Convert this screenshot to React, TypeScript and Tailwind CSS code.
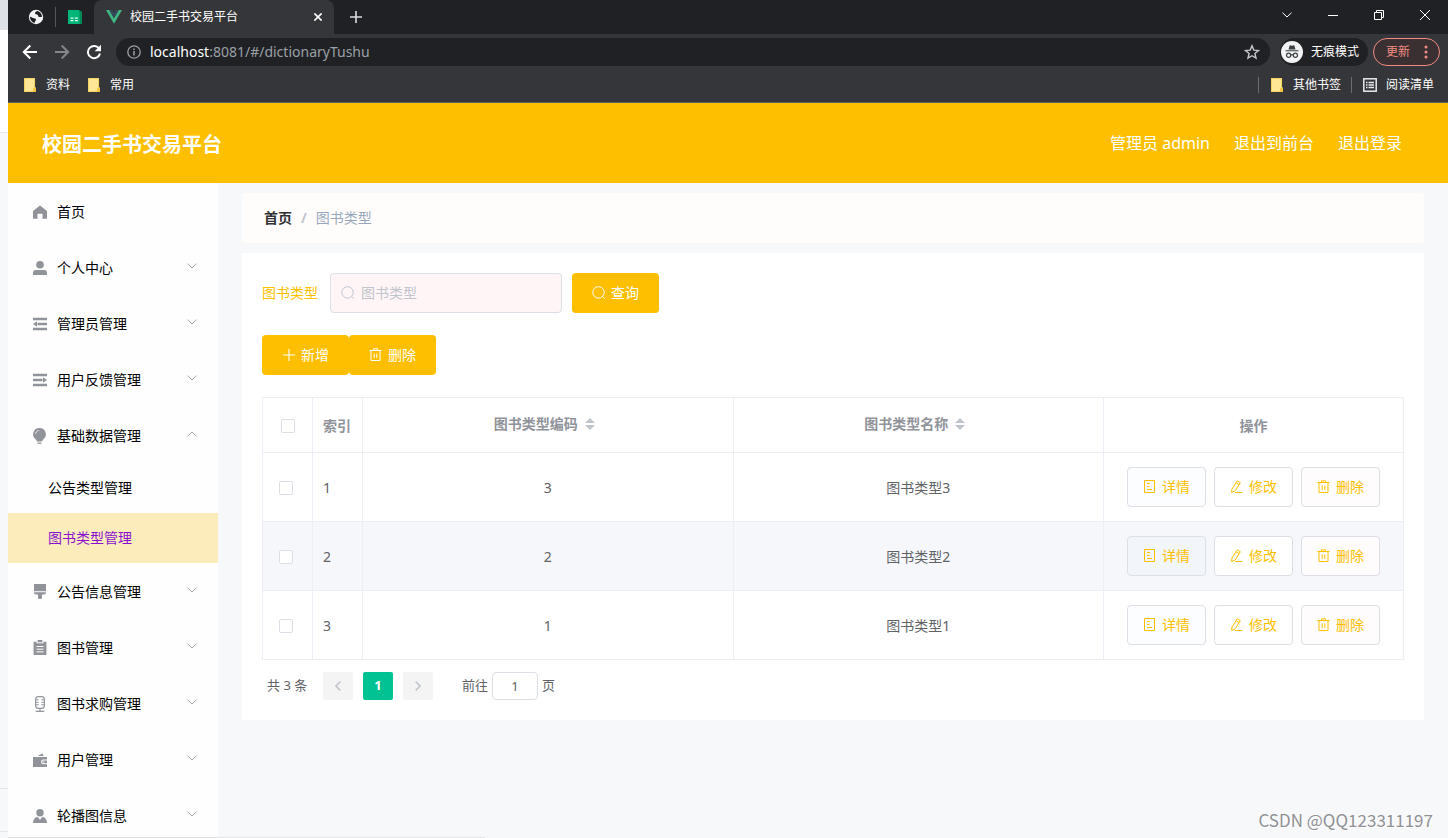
import type { ReactNode } from 'react';

type IconProps = { className?: string };

type MenuEntry = {
  label: string;
  icon: ReactNode;
  arrow?: 'up' | 'down';
  children?: { label: string; active?: boolean }[];
};

/* ---------- Icons ---------- */

const HomeIcon = () => (
  <svg viewBox="0 0 14 14" className="size-[14px]" fill="currentColor">
    <path d="M7 .4 0 6v7.2c0 .4.2.6.6.6h3.9V9.5c0-.5.3-.8.8-.8h3.4c.5 0 .8.3.8.8v4.3h3.9c.4 0 .6-.2.6-.6V6z" />
  </svg>
);

const UserIcon = () => (
  <svg viewBox="0 0 14 14" className="size-[14px]" fill="currentColor">
    <circle cx="7" cy="3.8" r="3.8" />
    <path d="M2.6 9h8.8C13 9 14 10.200 14 11.600V14H0v-2.400C0 10.200 1 9 2.600 9z" />
  </svg>
);

const FoldIcon = () => (
  <svg viewBox="0 0 14 14" className="size-[14px]" fill="currentColor">
    <path d="M0 .800h14v2.400H0zM4.500 5.800H14v2.400H4.500zM0 10.800h14v2.400H0zM0 7l4-2.700v5.400z" />
  </svg>
);

const UnfoldIcon = () => (
  <svg viewBox="0 0 14 14" className="size-[14px]" fill="currentColor">
    <path d="M0 .800h14v2.400H0zM0 5.800h9.500v2.400H0zM0 10.800h14v2.400H0zM14 7l-4-2.700v5.400z" />
  </svg>
);

const BulbIcon = () => (
  <svg viewBox="0 0 14 16" className="h-4 w-[14px]" fill="currentColor">
    <path d="M6.500 0a6.400 6.400 0 0 1 3.700 11.600c-.6.5-.9 1-1.100 1.900H3.900c-.2-.9-.5-1.400-1.100-1.900A6.400 6.400 0 0 1 6.500 0zM4.500 14.600h4v1.200h-4z" />
    <path d="M2.700 5.800c.2-1.800 1.400-3 3-3.400" fill="none" stroke="#fff" strokeWidth=".9" />
  </svg>
);

const BrushIcon = () => (
  <svg viewBox="0 0 14 15" className="h-[15px] w-[14px]" fill="currentColor">
    <path d="M1 0h12v7.200H1zM1 8.200h12c0 1.600-.9 2.400-2.400 2.400H9v3.200c0 .8-.7 1.200-2 1.200s-2-.4-2-1.200v-3.200H3.400C1.900 10.600 1 9.800 1 8.200z" />
  </svg>
);

const ClipboardIcon = () => (
  <svg viewBox="0 0 14 15" className="h-[15px] w-[14px]" fill="currentColor">
    <path d="M.6 1.800h3v1.500h6.800V1.800h3V15H.6zM4.600 0h4.800v2.300H4.600z" />
    <path d="M3.500 6.500h7M3.500 9.200h7M3.500 11.900h7" stroke="#fff" strokeWidth="1" />
  </svg>
);

const MicIcon = () => (
  <svg viewBox="0 0 14 16" className="h-4 w-[14px]" fill="none" stroke="currentColor" strokeWidth="1.1">
    <rect x="2.600" y=".6" width="8.800" height="11.800" rx="3" />
    <path d="M2.600 3.800h3M2.600 6.300h3M2.600 8.800h3M8.400 3.800h3M8.400 6.300h3M8.400 8.800h3M7 12.400v3M2.800 15.400h8.400" />
  </svg>
);

const WalletIcon = () => (
  <svg viewBox="0 0 14 14" className="size-[14px]" fill="currentColor">
    <path d="M4.500 3 9.300.6l1.500 2.400z" />
    <path d="M0 4h14v2.600h-3.600a2.300 2.300 0 0 0 0 4.600H14V14H0z" />
    <path d="M10.500 7.600H14v2.600h-3.500a1.300 1.300 0 0 1 0-2.600z" />
    <circle cx="10.800" cy="8.900" r=".7" fill="#fff" />
  </svg>
);

const MemberIcon = () => (
  <svg viewBox="0 0 14 14" className="size-[14px]" fill="currentColor">
    <circle cx="7" cy="3.700" r="3.700" />
    <path d="M4.400 7.800 7 10.700l2.600-2.900c2.600.8 4.400 3 4.400 6.200H0c0-3.200 1.800-5.400 4.400-6.200z" />
  </svg>
);

const SearchIcon = ({ className }: IconProps) => (
  <svg viewBox="0 0 14 14" className={className} fill="none" stroke="currentColor" strokeWidth="1">
    <circle cx="6.500" cy="6.400" r="5.700" />
    <path d="m10.500 10.400 2.300 2.300" />
  </svg>
);

const PlusIcon = () => (
  <svg viewBox="0 0 14 14" className="size-[14px]" fill="none" stroke="currentColor" strokeWidth="1.1">
    <path d="M7 1v12M1 7h12" />
  </svg>
);

const TrashIcon = () => (
  <svg viewBox="0 0 14 14" className="size-[14px]" fill="none" stroke="currentColor" strokeWidth="1">
    <path d="M.5 2.500h12M4.500 2.500V.8h4v1.700M2 2.500v10h9v-10M5.200 5.500V10M7.800 5.500V10" />
  </svg>
);

const DocumentIcon = () => (
  <svg viewBox="0 0 14 14" className="size-[14px]" fill="none" stroke="currentColor" strokeWidth="1">
    <path d="M1.500.500h10v12h-10zM4 3.500h3M4 6.500h2.500M4 9.500h5" />
  </svg>
);

const EditIcon = () => (
  <svg viewBox="0 0 14 14" className="size-[14px]" fill="none" stroke="currentColor" strokeWidth="1">
    <path d="M7.300.900 10.300 2.700 5.300 10.800 1.600 12.500 2 8.900zM6.200 2.800l3 1.800M5 12.500h7.500" />
  </svg>
);

const ChevronIcon = ({ className }: IconProps) => (
  <svg viewBox="0 0 10 6" className={className} fill="none" stroke="currentColor" strokeWidth="1">
    <path d="m.5.700 4.500 4.300L9.500.700" />
  </svg>
);

const FolderIcon = () => (
  <svg viewBox="0 0 12 14" className="h-[14px] w-3">
    <path d="M0 0h11v9l1 1v4H0z" fill="#ffe694" />
    <path d="M.4.400h10.200v9M.4.400v13.200H9" fill="none" stroke="#f2c94c" strokeWidth=".8" />
    <path d="M9 13.600V11c0-.8.500-1.300 1.500-1.300s1.500.5 1.500 1.300v3H9z" fill="#f0c541" />
  </svg>
);

const GlobeIcon = () => (
  <svg viewBox="0 0 16 16" className="size-4">
    <circle cx="8" cy="8" r="7.200" fill="#f1f3f4" />
    <path d="M1.800 7.600 5 8.900c1.300.5 2.600.1 3 1.400.3 1-.8 1.300-1 2.300l-.3 1.500C3.800 13.500 1.900 11 1.800 7.600zM9.300 2c-1.700.5-2.500 1.400-2.200 2.500.3 1 1.700.6 2.500 1.200.9.700.3 1.700 1.300 2.200 1 .4 1.800-.1 3.200-.2C13.900 4.800 12 2.500 9.300 2z" fill="#202124" />
  </svg>
);

const SheetIcon = () => (
  <svg viewBox="0 0 14 14" className="size-[14px]">
    <path d="M0 0h11.500v1.500H14V14H0z" fill="#00b578" />
    <path d="M11.500 1.500H14V14h-2.500z" fill="#008a55" />
    <path d="M2.500 7.500h3v1.300h-3zM6.800 7.500h3v1.300h-3zM2.500 10h3v1.300h-3zM6.800 10h3v1.300h-3z" fill="#e8fff5" />
  </svg>
);

const VueIcon = () => (
  <svg viewBox="0 0 16 14" className="h-[14px] w-4">
    <path d="M0 0h3.200L8 8.300 12.800 0H16L8 13.800z" fill="#41b883" />
    <path d="M3.200 0h3L8 3.100 9.800 0h3L8 8.300z" fill="#35495e" />
  </svg>
);

const BackIcon = ({ className }: IconProps) => (
  <svg viewBox="0 0 16 16" className={className} fill="none" stroke="currentColor" strokeWidth="2">
    <path d="M15 8H2.500M8.300 1.500 1.800 8l6.500 6.500" />
  </svg>
);

const ReloadIcon = () => (
  <svg viewBox="0 0 16 16" className="size-4">
    <path d="M13.300 5A6.100 6.100 0 1 0 14 9.500" fill="none" stroke="#fff" strokeWidth="2" />
    <path d="M15 .8v6.400H8.600z" fill="#fff" />
  </svg>
);

const InfoIcon = () => (
  <svg viewBox="0 0 14 14" className="size-[14px]" fill="none" stroke="#9aa0a6">
    <circle cx="7" cy="7" r="6.200" strokeWidth="1.300" />
    <path d="M7 6v4.500M7 3.400v1.500" strokeWidth="1.500" />
  </svg>
);

const StarIcon = () => (
  <svg viewBox="0 0 16 16" className="size-4" fill="none" stroke="#c4c7cb" strokeWidth="1.400">
    <path d="m8 1.800 1.800 4.300 4.700.4-3.600 3 1.100 4.600L8 11.700l-4 2.400 1.100-4.600-3.600-3 4.700-.4z" />
  </svg>
);

const IncognitoIcon = () => (
  <svg viewBox="0 0 22 22" className="size-[22px]">
    <circle cx="11" cy="11" r="11" fill="#f1f3f4" />
    <path d="M7.500 8.500 8.600 4.800c.2-.5.600-.6 1.100-.4l1.300.4 1.300-.4c.5-.2.900-.1 1.100.4l1.100 3.700zM4.500 9.200h13v1.100h-13z" fill="#3c4043" />
    <g fill="none" stroke="#3c4043" strokeWidth="1.200">
      <circle cx="7.600" cy="14.300" r="2.100" />
      <circle cx="14.400" cy="14.300" r="2.100" />
      <path d="M9.700 14c.8-.5 1.800-.5 2.600 0" />
    </g>
  </svg>
);

const ReadingListIcon = () => (
  <svg viewBox="0 0 14 14" className="size-[14px]" fill="none" stroke="#e8eaed">
    <rect x=".8" y=".8" width="12.400" height="12.400" strokeWidth="1.500" />
    <path d="M3 4.500h1.500M3 7h1.500M3 9.500h1.500M5.500 4.500H11M5.500 7H11M5.500 9.500H11" strokeWidth="1.300" />
  </svg>
);

/* ---------- Data ---------- */

const menu: MenuEntry[] = [
  { label: '首页', icon: <HomeIcon /> },
  { label: '个人中心', icon: <UserIcon />, arrow: 'down' },
  { label: '管理员管理', icon: <FoldIcon />, arrow: 'down' },
  { label: '用户反馈管理', icon: <UnfoldIcon />, arrow: 'down' },
  {
    label: '基础数据管理',
    icon: <BulbIcon />,
    arrow: 'up',
    children: [{ label: '公告类型管理' }, { label: '图书类型管理', active: true }],
  },
  { label: '公告信息管理', icon: <BrushIcon />, arrow: 'down' },
  { label: '图书管理', icon: <ClipboardIcon />, arrow: 'down' },
  { label: '图书求购管理', icon: <MicIcon />, arrow: 'down' },
  { label: '用户管理', icon: <WalletIcon />, arrow: 'down' },
  { label: '轮播图信息', icon: <MemberIcon />, arrow: 'down' },
];

const rows = [
  { index: 1, code: 3, name: '图书类型3' },
  { index: 2, code: 2, name: '图书类型2', hovered: true },
  { index: 3, code: 1, name: '图书类型1' },
];

/* ---------- Browser chrome ---------- */

function BrowserChrome() {
  return (
    <div className="shrink-0 border-b border-[#5f6062] bg-[#35363a] text-xs text-white">
      {/* Tabs */}
      <div className="flex h-[34px] items-stretch bg-[#202124]">
        <div className="flex items-center pl-5">
          <GlobeIcon />
          <span className="mr-3 ml-[11px] h-5 w-px bg-[#54565a]" />
          <SheetIcon />
        </div>
        <div className="ml-3 flex w-60 items-center rounded-t-lg bg-[#35363a] px-3">
          <VueIcon />
          <span className="ml-2 flex-1">校园二手书交易平台</span>
          <button aria-label="关闭标签页" className="flex size-2 items-center">
            <svg viewBox="0 0 8 8" className="size-2" stroke="#fff" strokeWidth="1.6">
              <path d="m.4.4 7.200 7.200M7.600.4.400 7.600" />
            </svg>
          </button>
        </div>
        <button aria-label="新标签页" className="ml-4 flex items-center">
          <svg viewBox="0 0 12 12" className="size-3" stroke="#dadce0" strokeWidth="1.600">
            <path d="M6 0v12M0 6h12" />
          </svg>
        </button>
        <div className="ml-auto flex h-[29px] items-center gap-9 pr-[18px]">
          <button aria-label="搜索标签页">
            <ChevronIcon className="h-[6px] w-[10px]" />
          </button>
          <button aria-label="最小化">
            <svg viewBox="0 0 10 10" className="size-[10px]" stroke="#fff">
              <path d="M0 5.500h10" />
            </svg>
          </button>
          <button aria-label="还原">
            <svg viewBox="0 0 10 10" className="size-[10px]" fill="none" stroke="#fff">
              <path d="M.5 2.500h7v7h-7zM2.500 2.500v-2h7v7h-2" />
            </svg>
          </button>
          <button aria-label="关闭">
            <svg viewBox="0 0 10 10" className="size-[10px]" stroke="#fff">
              <path d="m0 0 10 10M10 0 0 10" />
            </svg>
          </button>
        </div>
      </div>

      {/* Toolbar */}
      <div className="flex h-9 items-center pr-2 pl-[14px]">
        <button aria-label="后退"><BackIcon className="size-4" /></button>
        <button aria-label="前进" className="ml-4 text-[#85878a]"><BackIcon className="size-4 rotate-180" /></button>
        <button aria-label="重新加载" className="ml-4"><ReloadIcon /></button>
        <div className="ml-[14px] flex h-7 flex-1 items-center rounded-full bg-[#202124] pr-[10px] pl-[11px]">
          <InfoIcon />
          <span className="ml-[9px] flex-1 text-sm text-[#9aa0a6]">
            <span className="text-white">localhost</span>:8081/#/dictionaryTushu
          </span>
          <StarIcon />
        </div>
        <div className="ml-[10px] flex h-7 w-[88px] items-center rounded-full bg-[#202124] pl-px">
          <IncognitoIcon />
          <span className="ml-2">无痕模式</span>
        </div>
        <button className="ml-[5px] flex h-7 w-[67px] items-center rounded-full border border-[#f28b82] bg-[#3a2f31] pl-3 text-[#f28b82]">
          更新
          <svg viewBox="0 0 4 14" className="ml-[14px] h-[14px] w-1" fill="#f28b82">
            <circle cx="2" cy="2" r="1.500" />
            <circle cx="2" cy="7" r="1.500" />
            <circle cx="2" cy="12" r="1.500" />
          </svg>
        </button>
      </div>

      {/* Bookmarks */}
      <div className="flex h-8 items-center pr-[14px] pb-[2px] pl-4">
        <a href="#" className="flex items-center gap-[10px]"><FolderIcon />资料</a>
        <a href="#" className="ml-[18px] flex items-center gap-[10px]"><FolderIcon />常用</a>
        <span className="ml-auto h-4 w-px bg-[#6a6c70]" />
        <a href="#" className="ml-3 flex items-center gap-[10px]"><FolderIcon />其他书签</a>
        <span className="ml-[10px] h-4 w-px bg-[#6a6c70]" />
        <a href="#" className="ml-[11px] flex items-center gap-[9px]"><ReadingListIcon />阅读清单</a>
      </div>
    </div>
  );
}

/* ---------- App ---------- */

function Sidebar() {
  return (
    <nav className="w-[210px] shrink-0 bg-[#fefefe] text-sm text-black">
      {menu.map((item) => (
        <div key={item.label}>
          <a href="#" className="flex h-14 items-center pr-[21px] pl-[25px]">
            <span className="flex w-[14px] justify-center pt-px text-[#909399]">{item.icon}</span>
            <span className="ml-[10px] flex-1 pt-px">{item.label}</span>
            {item.arrow === 'down' && <ChevronIcon className="mb-[2px] h-[6px] w-[10px] text-[#a8a09c]" />}
            {item.arrow === 'up' && <ChevronIcon className="mb-[2px] h-[6px] w-[10px] rotate-180 text-[#a8a09c]" />}
          </a>
          {item.children?.map((child) => (
            <a
              key={child.label}
              href="#"
              className={
                child.active
                  ? 'flex h-[50px] items-center bg-[#fdecbb] pl-10 text-[#8a10d0]'
                  : 'flex h-[50px] items-center pl-10'
              }
            >
              {child.label}
            </a>
          ))}
        </div>
      ))}
    </nav>
  );
}

function SortCarets() {
  return (
    <svg viewBox="0 0 10 12" className="mx-[7px] h-3 w-[10px]" fill="#c0c4cc">
      <path d="M5 0l5 5H0zM5 12l5-5H0z" />
    </svg>
  );
}

function CheckBox({ label }: { label: string }) {
  return (
    <input
      type="checkbox"
      aria-label={label}
      className="block size-[14px] appearance-none rounded-[2px] border border-[#dcdfe6] bg-white"
    />
  );
}

function BookTypeTable() {
  return (
    <table className="mt-[22px] w-full table-fixed border-collapse text-sm text-[#606266]">
      <colgroup>
        <col className="w-[50px]" />
        <col className="w-[50px]" />
        <col />
        <col />
        <col className="w-[300px]" />
      </colgroup>
      <thead className="text-[#909399]">
        <tr className="h-[55px]">
          <th className="border border-[#ebeef5] pt-[2px] pl-[18px]"><CheckBox label="全选" /></th>
          <th className="border border-[#ebeef5] pt-[2px] pl-[10px] text-left">索引</th>
          <th className="border border-[#ebeef5] pb-[2px]">
            <div className="flex items-center justify-center">图书类型编码<SortCarets /></div>
          </th>
          <th className="border border-[#ebeef5] pb-[2px]">
            <div className="flex items-center justify-center">图书类型名称<SortCarets /></div>
          </th>
          <th className="border border-[#ebeef5] pt-[2px]">操作</th>
        </tr>
      </thead>
      <tbody>
        {rows.map((row) => (
          <tr key={row.index} className={row.hovered ? 'h-[69px] bg-[#f5f7fa]' : 'h-[69px] bg-white'}>
            <td className="border border-[#ebeef5] pt-[2px] pl-4"><CheckBox label={`选择第${row.index}行`} /></td>
            <td className="border border-[#ebeef5] pt-[2px] pl-[10px]">{row.index}</td>
            <td className="border border-[#ebeef5] pt-[2px] text-center">{row.code}</td>
            <td className="border border-[#ebeef5] pt-[2px] text-center">{row.name}</td>
            <td className="border border-[#ebeef5]">
              <div className="flex justify-center gap-2 text-[#fdbf00]">
                <button
                  className={
                    row.hovered
                      ? 'flex h-10 items-center gap-[5px] rounded border border-[#dcdfe6] bg-[#f2f5fa] px-[15px]'
                      : 'flex h-10 items-center gap-[5px] rounded border border-[#dcdfe6] bg-[#fcfdff] px-[15px]'
                  }
                >
                  <DocumentIcon />详情
                </button>
                <button className="flex h-10 items-center gap-[5px] rounded border border-[#dcdfe6] bg-white px-[15px]">
                  <EditIcon />修改
                </button>
                <button className="flex h-10 items-center gap-[5px] rounded border border-[#dcdfe6] bg-[#fffcfd] px-[15px]">
                  <TrashIcon />删除
                </button>
              </div>
            </td>
          </tr>
        ))}
      </tbody>
    </table>
  );
}

function Pagination() {
  return (
    <div className="mt-3 flex h-7 items-center pl-[5px] text-[13px] text-[#606266]">
      <span className="w-14">共 3 条</span>
      <button aria-label="上一页" className="flex h-7 w-[30px] items-center justify-center rounded-[2px] bg-[#f4f4f5] text-[#c0c4cc]">
        <svg viewBox="0 0 6 10" className="h-[10px] w-[6px]" fill="none" stroke="currentColor" strokeWidth="1.500">
          <path d="M5.300.6.900 5l4.400 4.400" />
        </svg>
      </button>
      <button className="ml-[10px] h-7 w-[30px] rounded-[2px] bg-[#00c292] font-bold text-white">1</button>
      <button aria-label="下一页" className="ml-[10px] flex h-7 w-[30px] items-center justify-center rounded-[2px] bg-[#f4f4f5] text-[#c0c4cc]">
        <svg viewBox="0 0 6 10" className="h-[10px] w-[6px]" fill="none" stroke="currentColor" strokeWidth="1.500">
          <path d="M.7.600 5.100 5 .7 9.400" />
        </svg>
      </button>
      <label className="ml-[29px] flex items-center gap-1">
        前往
        <input
          type="text"
          defaultValue="1"
          className="h-7 w-[46px] rounded border border-[#dcdfe6] bg-white text-center"
        />
        页
      </label>
    </div>
  );
}

export default function App() {
  return (
    <div className="relative flex h-screen overflow-hidden bg-[#f7f8fa] font-['Noto_Sans','Noto_Sans_CJK_SC',sans-serif]">
      {/* Window behind */}
      <div className="flex w-2 shrink-0 flex-col">
        <div className="h-[30px] bg-[#dee1e6]" />
        <div className="h-[103px] border-b border-[#e6e7e9] bg-white" />
        <div className="flex-1" />
        <div className="h-11 border-y border-[#e4e5e7]" />
        <div className="h-[6px]" />
      </div>

      <div className="flex min-w-0 flex-1 flex-col">
        <BrowserChrome />

        <header className="flex h-20 shrink-0 items-center justify-between bg-[#fdbf00] pr-[46px] pl-[34px] text-white">
          <h1 className="pt-[3px] text-xl font-bold">校园二手书交易平台</h1>
          <div className="flex gap-6 text-base">
            <span>管理员 admin</span>
            <a href="#">退出到前台</a>
            <a href="#">退出登录</a>
          </div>
        </header>

        <div className="flex min-h-0 flex-1">
          <Sidebar />

          <main className="min-w-0 flex-1 pt-[10px] pr-6 pl-6">
            <div className="flex h-[50px] items-center gap-[9px] rounded bg-[#fffdfb] px-[22px] text-sm">
              <a href="#" className="font-bold text-[#303133]">首页</a>
              <span className="font-bold text-[#c0c4cc]">/</span>
              <span className="text-[#97a8be]">图书类型</span>
            </div>

            <section className="mt-[10px] bg-white p-5">
              {/* Search form */}
              <div className="flex items-center text-sm">
                <label htmlFor="book-type" className="text-[#fdbf00]">图书类型</label>
                <div className="ml-3 flex h-10 w-[232px] items-center rounded border border-[#dcdfe6] bg-[#fff5f6] px-[10px]">
                  <SearchIcon className="size-[14px] text-[#c0c4cc]" />
                  <input
                    id="book-type"
                    type="text"
                    placeholder="图书类型"
                    className="ml-[6px] min-w-0 flex-1 bg-transparent outline-none placeholder:text-[#c0c4cc]"
                  />
                </div>
                <button className="ml-[10px] flex h-10 items-center gap-[5px] rounded bg-[#fdbf00] px-5 text-white">
                  <SearchIcon className="size-[14px]" />查询
                </button>
              </div>

              <div className="mt-[22px] flex text-sm text-white">
                <button className="flex h-10 items-center gap-[5px] rounded bg-[#fdbf00] px-5">
                  <PlusIcon />新增
                </button>
                <button className="flex h-10 items-center gap-[5px] rounded bg-[#fdbf00] px-5">
                  <TrashIcon />删除
                </button>
              </div>

              <BookTypeTable />
              <Pagination />
            </section>
          </main>
        </div>
      </div>

      {/* Status bar edge and watermark */}
      <div className="absolute bottom-0 left-2 h-px w-[477px] bg-[#e2e3e5]" />
      <div className="absolute right-[15px] bottom-[6px] font-['Noto_Sans_CJK_SC',sans-serif] text-[17px] leading-6 text-[#8f9194] [text-shadow:1px_1px_0_#ffffff]">
        CSDN @QQ123311197
      </div>
    </div>
  );
}
